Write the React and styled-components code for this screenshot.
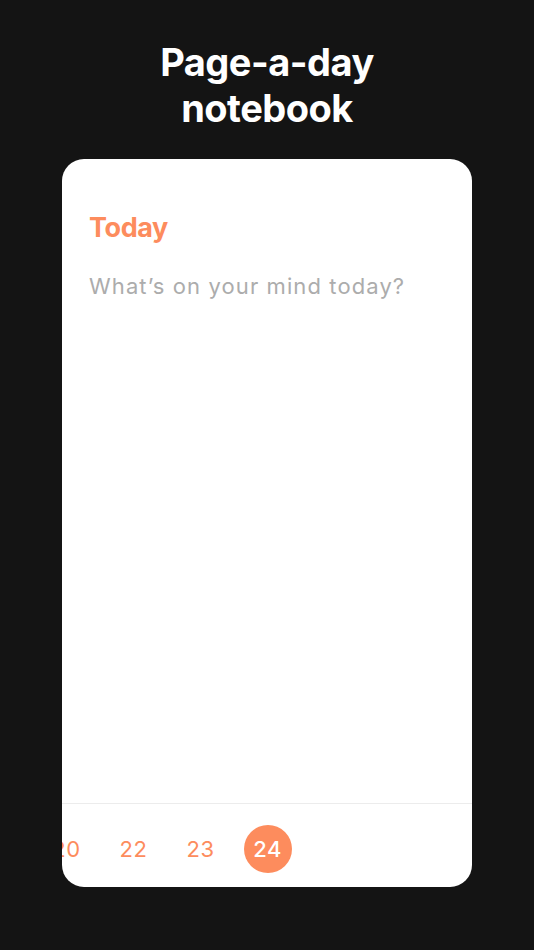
import styled, { createGlobalStyle } from "styled-components";

const GlobalStyle = createGlobalStyle`
  html, body {
    margin: 0;
    padding: 0;
    background: #141414;
  }
  body {
    font-family: Inter, "Noto Sans", sans-serif;
    -webkit-font-smoothing: antialiased;
  }
`;

const Screen = styled.div`
  width: 534px;
  height: 950px;
  background: #141414;
  display: flex;
  flex-direction: column;
  align-items: center;
  overflow: hidden;
`;

const Title = styled.h1`
  margin: 39px 0 0;
  color: #fff;
  font-size: 38px;
  line-height: 46px;
  font-weight: 700;
  letter-spacing: -0.5px;
  text-align: center;
`;

const Card = styled.div`
  margin-top: 28px;
  width: 410px;
  height: 728px;
  background: #fff;
  border-radius: 22px;
  display: flex;
  flex-direction: column;
  overflow: hidden;
`;

const Page = styled.div`
  flex: 1;
  padding: 51px 27px 0;
`;

const Heading = styled.div`
  color: #fd8c5d;
  font-size: 27px;
  line-height: 36px;
  font-weight: 700;
  letter-spacing: -0.4px;
`;

const Placeholder = styled.div`
  margin-top: 26px;
  color: #acacac;
  font-size: 22px;
  line-height: 28px;
  font-weight: 400;
  letter-spacing: 1.1px;
`;

const DateStrip = styled.div`
  height: 84px;
  box-sizing: border-box;
  padding-top: 6px;
  border-top: 1px solid #ececec;
  display: flex;
  align-items: center;
  overflow: hidden;
`;

const DateRow = styled.div`
  display: flex;
  margin-left: -29px;
  flex-shrink: 0;
`;

const DateItem = styled.div`
  width: 67px;
  display: flex;
  justify-content: center;
  align-items: center;
  flex-shrink: 0;
`;

const DateLabel = styled.span`
  width: 48px;
  height: 48px;
  border-radius: 50%;
  display: flex;
  align-items: center;
  justify-content: center;
  font-size: 22px;
  letter-spacing: 0.5px;
  font-weight: ${(p) => (p.$active ? 500 : 400)};
  color: ${(p) => (p.$active ? "#fff" : "#fd8c5d")};
  background: ${(p) => (p.$active ? "#fd8c5d" : "transparent")};
`;

const dates = [
  { day: 20 },
  { day: 22 },
  { day: 23 },
  { day: 24, active: true },
];

export default function App() {
  return (
    <>
      <GlobalStyle />
      <Screen>
        <Title>
          Page-a-day
          <br />
          notebook
        </Title>
        <Card>
          <Page>
            <Heading>Today</Heading>
            <Placeholder>What’s on your mind today?</Placeholder>
          </Page>
          <DateStrip>
            <DateRow>
              {dates.map((d) => (
                <DateItem key={d.day}>
                  <DateLabel $active={d.active}>{d.day}</DateLabel>
                </DateItem>
              ))}
            </DateRow>
          </DateStrip>
        </Card>
      </Screen>
    </>
  );
}
